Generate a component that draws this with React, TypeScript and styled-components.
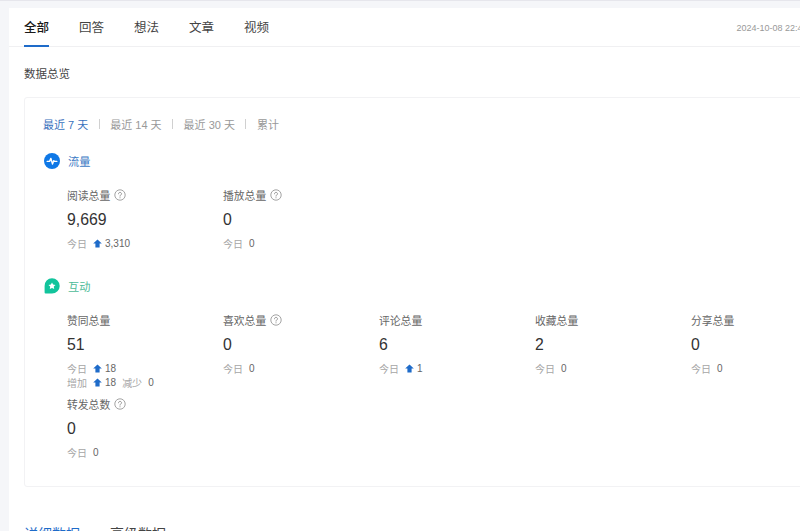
import React from 'react';
import styled, { createGlobalStyle } from 'styled-components';

const GlobalStyle = createGlobalStyle`
  html, body {
    margin: 0;
    height: 100%;
    overflow: hidden;
    background: #f5f6f9;
  }
  body {
    font-family: "Liberation Sans", "Noto Sans CJK SC", sans-serif;
  }
`;

const Page = styled.div`
  height: 531px;
  box-sizing: border-box;
  padding: 7px 0 0 9px;
  border-top: 1px solid #e6e6ec;
  overflow: hidden;
`;

const Panel = styled.main`
  width: 826px;
  height: 600px;
  background: #fff;
`;

const TabBar = styled.div`
  display: flex;
  align-items: center;
  gap: 30px;
  height: 39px;
  box-sizing: border-box;
  padding: 0 15px;
  border-bottom: 1px solid #f0f0f2;
`;

const Tab = styled.div<{ $active?: boolean }>`
  position: relative;
  padding-top: 2px;
  font-size: 12.5px;
  line-height: 37px;
  color: ${(p) => (p.$active ? '#1a1a1a' : '#444')};
  font-weight: ${(p) => (p.$active ? 500 : 400)};

  ${(p) =>
    p.$active &&
    `&::after {
      content: '';
      position: absolute;
      left: 0;
      right: 0;
      bottom: 0;
      height: 2px;
      background: #1e6bc9;
    }`}
`;

const DateText = styled.div`
  margin-left: auto;
  padding-top: 2px;
  font-size: 9px;
  color: #999;
  white-space: nowrap;
`;

const Overview = styled.section`
  padding: 0 15px;
`;

const OverviewTitle = styled.h2`
  margin: 0;
  padding: 18px 0 14px;
  font-size: 11.5px;
  line-height: 18px;
  font-weight: 400;
  color: #444;
`;

const Card = styled.div`
  box-sizing: border-box;
  height: 390px;
  padding: 17px 18px 0;
  border: 1px solid #f2f2f4;
  border-radius: 3px;
`;

const RangeRow = styled.div`
  display: flex;
  align-items: center;
  gap: 10.5px;
  height: 18px;
`;

const RangeItem = styled.span<{ $active?: boolean }>`
  font-size: 11px;
  color: ${(p) => (p.$active ? '#3a72bd' : '#999')};
`;

const RangeDivider = styled.span`
  width: 1px;
  height: 10px;
  background: #d0d0d0;
`;

const SectionHead = styled.div<{ $top: number }>`
  display: flex;
  align-items: center;
  gap: 8px;
  height: 16px;
  margin-top: ${(p) => p.$top}px;
  margin-left: 1px;
`;

const SectionName = styled.span<{ $color: string }>`
  font-size: 11.2px;
  color: ${(p) => p.$color};
`;

const MetricGrid = styled.div`
  display: grid;
  grid-template-columns: repeat(5, 156px);
  row-gap: 6px;
  margin-top: 17px;
  padding-left: 24px;
`;

const Metric = styled.div``;

const MetricLabel = styled.div`
  display: flex;
  align-items: center;
  gap: 4px;
  height: 18px;
  font-size: 10.8px;
  color: #666;
`;

const MetricValue = styled.div`
  margin-top: 4px;
  font-size: 15.8px;
  line-height: 24px;
  color: #333;
`;

const StatRow = styled.div<{ $first?: boolean }>`
  display: flex;
  align-items: center;
  height: 14px;
  margin-top: ${(p) => (p.$first ? 4 : 0)}px;
  font-size: 10px;
`;

const StatName = styled.span<{ $inset?: boolean }>`
  color: #a6a6a6;
  margin-right: 6px;
  margin-left: ${(p) => (p.$inset ? 6 : 0)}px;
`;

const StatNumber = styled.span`
  color: #666;
`;

const UpArrow = styled.svg`
  width: 9px;
  height: 9px;
  margin: 0 3px 0 0;
`;

const HelpIcon = styled.svg`
  width: 12px;
  height: 12px;
`;

const DetailTabs = styled.div`
  display: flex;
  gap: 30px;
  margin-top: 37px;
`;

const DetailTab = styled.div<{ $active?: boolean }>`
  font-size: 14px;
  line-height: 20px;
  color: ${(p) => (p.$active ? '#1e6bc9' : '#444')};
`;

const Help = () => (
  <HelpIcon viewBox="0 0 12 12" fill="none">
    <circle cx="6" cy="6" r="5.2" stroke="#999" strokeWidth="0.9" />
    <path
      d="M4.5 4.8c0-.9.7-1.4 1.5-1.4s1.5.5 1.5 1.3c0 1.2-1.5 1.2-1.5 2.4"
      stroke="#888"
      strokeWidth="0.9"
      strokeLinecap="round"
    />
    <circle cx="6" cy="8.7" r="0.55" fill="#888" />
  </HelpIcon>
);

const Up = () => (
  <UpArrow viewBox="0 0 9 9">
    <path d="M4.5 0.5 L8.8 4.6 H6.6 V8.6 H2.4 V4.6 H0.2 Z" fill="#1e6bc9" />
  </UpArrow>
);

const TrafficIcon = () => (
  <svg width="16" height="16" viewBox="0 0 16 16">
    <circle cx="8" cy="8" r="8" fill="#0f78e6" />
    <path
      d="M3.2 8.4H5.6L6.9 5.4L8.5 11L9.8 7.6L10.5 8.4H12.8"
      fill="none"
      stroke="#fff"
      strokeWidth="1.4"
      strokeLinejoin="round"
      strokeLinecap="round"
    />
  </svg>
);

const InteractionIcon = () => (
  <svg width="16" height="16" viewBox="0 0 16 16">
    <path
      d="M8 0.2a7.7 7.7 0 0 1 0 15.4H1.6a1 1 0 0 1-1-1V8A7.5 7.5 0 0 1 8 0.2Z"
      fill="#12c49c"
    />
    <path
      d="M8 4.4l1.1 2.2 2.4.3-1.7 1.7.4 2.4L8 9.9l-2.2 1.1.4-2.4-1.7-1.7 2.4-.3Z"
      fill="#fff"
    />
  </svg>
);

interface MetricData {
  label: string;
  value: string;
  today: string;
  up?: boolean;
  help?: boolean;
  change?: { added: string; removed: string };
}

const traffic: MetricData[] = [
  { label: '阅读总量', value: '9,669', today: '3,310', up: true, help: true },
  { label: '播放总量', value: '0', today: '0', help: true },
];

const interaction: MetricData[] = [
  {
    label: '赞同总量',
    value: '51',
    today: '18',
    up: true,
    change: { added: '18', removed: '0' },
  },
  { label: '喜欢总量', value: '0', today: '0', help: true },
  { label: '评论总量', value: '6', today: '1', up: true },
  { label: '收藏总量', value: '2', today: '0' },
  { label: '分享总量', value: '0', today: '0' },
  { label: '转发总数', value: '0', today: '0', help: true },
];

const MetricCell = ({ data }: { data: MetricData }) => (
  <Metric>
    <MetricLabel>
      {data.label}
      {data.help && <Help />}
    </MetricLabel>
    <MetricValue>{data.value}</MetricValue>
    <StatRow $first>
      <StatName>今日</StatName>
      {data.up && <Up />}
      <StatNumber>{data.today}</StatNumber>
    </StatRow>
    {data.change && (
      <StatRow>
        <StatName>增加</StatName>
        <Up />
        <StatNumber>{data.change.added}</StatNumber>
        <StatName $inset>减少</StatName>
        <StatNumber>{data.change.removed}</StatNumber>
      </StatRow>
    )}
  </Metric>
);

export default function App() {
  return (
    <>
      <GlobalStyle />
      <Page>
        <Panel>
          <TabBar>
            <Tab $active>全部</Tab>
            <Tab>回答</Tab>
            <Tab>想法</Tab>
            <Tab>文章</Tab>
            <Tab>视频</Tab>
            <DateText>2024-10-08 22:45:30</DateText>
          </TabBar>
          <Overview>
            <OverviewTitle>数据总览</OverviewTitle>
            <Card>
              <RangeRow>
                <RangeItem $active>最近 7 天</RangeItem>
                <RangeDivider />
                <RangeItem>最近 14 天</RangeItem>
                <RangeDivider />
                <RangeItem>最近 30 天</RangeItem>
                <RangeDivider />
                <RangeItem>累计</RangeItem>
              </RangeRow>
              <SectionHead $top={20}>
                <TrafficIcon />
                <SectionName $color="#3a78c4">流量</SectionName>
              </SectionHead>
              <MetricGrid>
                {traffic.map((m) => (
                  <MetricCell key={m.label} data={m} />
                ))}
              </MetricGrid>
              <SectionHead $top={28}>
                <InteractionIcon />
                <SectionName $color="#4dbb98">互动</SectionName>
              </SectionHead>
              <MetricGrid>
                {interaction.map((m) => (
                  <MetricCell key={m.label} data={m} />
                ))}
              </MetricGrid>
            </Card>
            <DetailTabs>
              <DetailTab $active>详细数据</DetailTab>
              <DetailTab>高级数据</DetailTab>
            </DetailTabs>
          </Overview>
        </Panel>
      </Page>
    </>
  );
}
